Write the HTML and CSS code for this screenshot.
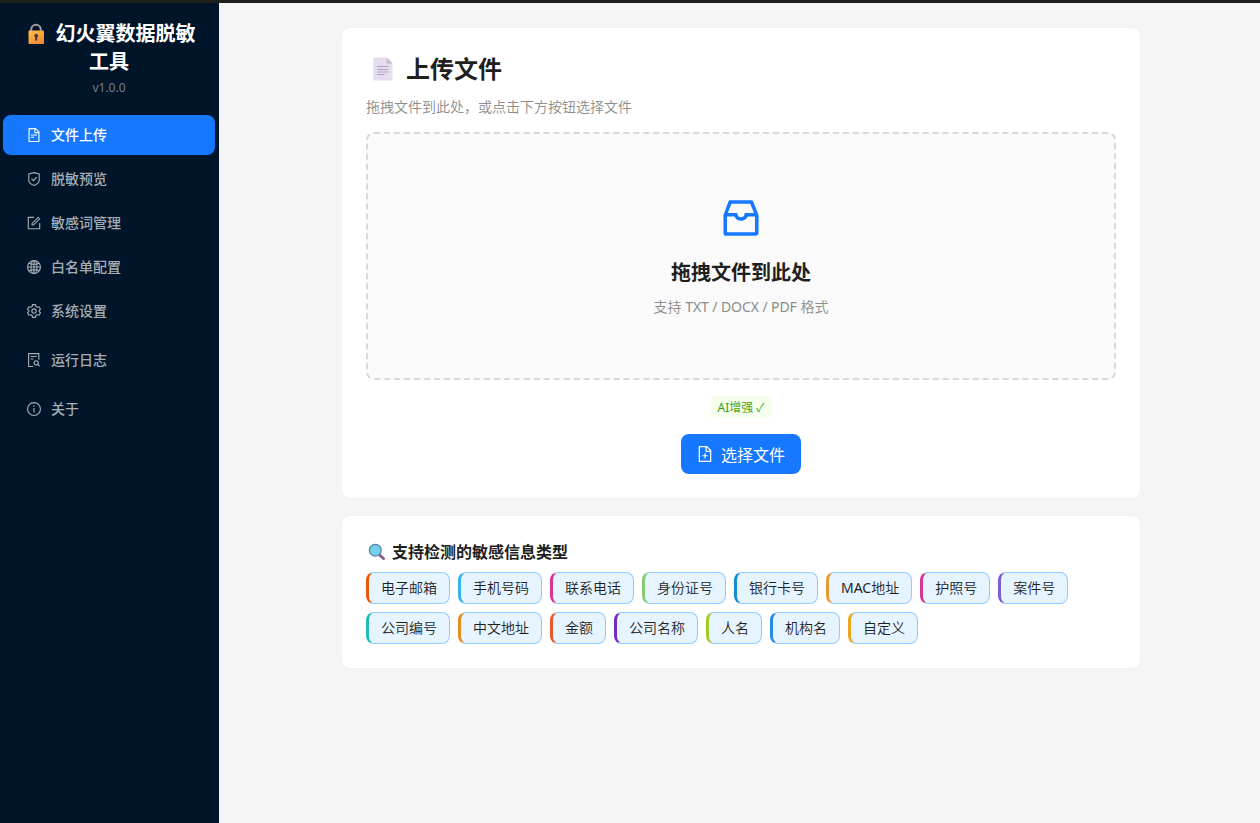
FILE: index.html
```html
<!DOCTYPE html>
<html lang="zh-CN">
<head>
<meta charset="utf-8">
<title>幻火翼数据脱敏工具</title>
<link rel="stylesheet" href="styles.css">
</head>
<body>
<div class="topline"></div>
<div class="app">
  <aside class="sidebar">
    <div class="brand">
      <h1 class="brand-title"><svg class="emoji-lock" viewBox="0 0 20 22"><path d="M5.200 10V6.500a4.800 4.800 0 0 1 9.600 0V10" fill="none" stroke="#a29aa8" stroke-width="2"/><defs><linearGradient id="gold" x1="0" y1="0" x2="0.600" y2="1"><stop offset="0" stop-color="#fcc04a"/><stop offset="1" stop-color="#f58a36"/></linearGradient></defs><rect x="2.500" y="7.500" width="15.500" height="13.500" rx="1" fill="url(#gold)"/><path d="M10.200 10.800a2 2 0 0 1 1 3.700V17.500H9.200v-3A2 2 0 0 1 10.200 10.800z" fill="#4a3440"/></svg>幻火翼数据脱敏工具</h1>
      <div class="version">v1.0.0</div>
    </div>
    <nav class="menu">
      <a class="item active"><svg class="icon" viewBox="64 64 896 896"><path d="M854.600 288.600L639.400 73.400c-6-6-14.100-9.400-22.600-9.400H192c-17.700 0-32 14.300-32 32v832c0 17.700 14.300 32 32 32h640c17.700 0 32-14.300 32-32V311.300c0-8.500-3.400-16.700-9.400-22.700zM790.200 326H602V137.800L790.200 326zm1.800 562H232V136h302v216a42 42 0 0042 42h216v494zM504 618H320c-4.400 0-8 3.600-8 8v48c0 4.400 3.600 8 8 8h184c4.400 0 8-3.600 8-8v-48c0-4.400-3.600-8-8-8zM312 490v48c0 4.400 3.600 8 8 8h384c4.400 0 8-3.600 8-8v-48c0-4.400-3.600-8-8-8H320c-4.400 0-8 3.600-8 8z"/></svg>文件上传</a>
      <a class="item"><svg class="icon line" viewBox="64 64 896 896"><path d="M512 104L846 195V600C846 740 690 850 512 922C334 850 178 740 178 600V195z"/><path d="M350 490L475 620L680 385"/></svg>脱敏预览</a>
      <a class="item"><svg class="icon" viewBox="64 64 896 896"><path d="M904 512h-56c-4.400 0-8 3.600-8 8v320H184V184h320c4.400 0 8-3.600 8-8v-56c0-4.400-3.600-8-8-8H144c-17.700 0-32 14.300-32 32v736c0 17.700 14.300 32 32 32h736c17.700 0 32-14.300 32-32V520c0-4.400-3.600-8-8-8z"/><path d="M355.900 534.900L354 653.800c-.1 8.900 7.100 16.200 16 16.200h.4l118-2.900c2-.1 4-.9 5.400-2.300l415.900-415c3.100-3.100 3.100-8.200 0-11.300L785.400 114.300c-1.600-1.600-3.600-2.300-5.700-2.300s-4.100.8-5.700 2.300l-415.800 415a8.300 8.300 0 00-2.300 5.600zm63.500 23.600L779.700 199l45.200 45.100-360.500 359.700-45.700 1.100.7-46.400z"/></svg>敏感词管理</a>
      <a class="item"><svg class="icon line" viewBox="64 64 896 896"><circle cx="512" cy="512" r="412"/><ellipse cx="512" cy="512" rx="190" ry="412"/><path d="M100 512H924M512 100V924M190 270Q512 420 834 270M190 754Q512 604 834 754"/></svg>白名单配置</a>
      <a class="item"><svg class="icon line" viewBox="64 64 896 896"><circle cx="512" cy="512" r="140"/><path d="M424 104H600L634 224Q678 240 718 272L838 244L926 396L840 484Q848 512 840 540L926 628L838 780L718 752Q678 784 634 800L600 920H424L390 800Q346 784 306 752L186 780L98 628L184 540Q176 512 184 484L98 396L186 244L306 272Q346 240 390 224z"/></svg>系统设置</a>
      <a class="item spaced"><svg class="icon line" viewBox="64 64 896 896"><path d="M470 924H168V100H820V500M296 290H690M296 450H480"/><circle cx="650" cy="690" r="134"/><path d="M745 785L870 910"/></svg>运行日志</a>
      <a class="item spaced"><svg class="icon line" viewBox="64 64 896 896"><circle cx="512" cy="512" r="412"/><path d="M512 448V736M512 288V384"/></svg>关于</a>
    </nav>
  </aside>
  <main class="content">
    <section class="card upload">
      <h2 class="title"><svg class="emoji-page" viewBox="0 0 20 24"><path d="M.500.500H14L19.500 6V23.500H.500z" fill="#e6def0"/><path d="M13.500.500 19.500 6.500H13.500z" fill="#c5bad0"/><path d="M4 9.500H15.500M4 12.500H15.500M4 15H15.500M4 17.500H11.500" stroke="#b1a5bb" stroke-width="1"/></svg>上传文件</h2>
      <p class="hint">拖拽文件到此处，或点击下方按钮选择文件</p>
      <div class="dropzone">
        <svg class="inbox" viewBox="0 0 1024 1024"><path d="M885.200 446.300l-.2-.8-112.200-285.100c-5-16.100-19.900-27.200-36.800-27.200H281.200c-17 0-32.100 11.300-36.900 27.600L139.400 443l-.3.7-.2.8c-1.300 4.900-1.700 9.900-1 14.800-.1 1.600-.2 3.200-.2 4.800V830a60.900 60.900 0 0060.800 60.800h627.200c33.500 0 60.800-27.300 60.900-60.800V464.100c0-1.300 0-2.600-.1-3.700.4-4.900 0-9.600-1.300-14.100zm-295.800-43l-.3 15.700c-.8 44.900-31.800 75.100-77.100 75.100-22.100 0-41.100-7.100-54.800-20.600S436 441.200 435.600 419l-.3-15.700H229.500L309 210h399.200l81.700 193.300H589.400zm-375 76.800h157.300c24.300 57.100 76 90.800 140.400 90.800 33.700 0 65-9.400 90.300-27.200 22.200-15.600 39.500-37.400 50.700-63.600h156.500V814H214.400V480.100z"/></svg>
        <h3 class="drop-title">拖拽文件到此处</h3>
        <p class="formats">支持 <span class="latin">TXT / DOCX / PDF</span> 格式</p>
      </div>
      <span class="ai-tag"><span class="latin">AI</span>增强 ✓</span>
      <button class="choose"><svg class="icon" viewBox="64 64 896 896"><path d="M854.600 288.600L639.400 73.400c-6-6-14.100-9.400-22.600-9.400H192c-17.700 0-32 14.300-32 32v832c0 17.700 14.300 32 32 32h640c17.700 0 32-14.300 32-32V311.300c0-8.500-3.400-16.700-9.400-22.700zM790.200 326H602V137.800L790.200 326zm1.800 562H232V136h302v216a42 42 0 0042 42h216v494zM544 472c0-4.400-3.600-8-8-8h-48c-4.400 0-8 3.600-8 8v108H372c-4.400 0-8 3.600-8 8v48c0 4.400 3.600 8 8 8h108v108c0 4.400 3.600 8 8 8h48c4.400 0 8-3.600 8-8V644h108c4.400 0 8-3.600 8-8v-48c0-4.400-3.600-8-8-8H544V472z"/></svg><span class="choose-label">选择文件</span></button>
    </section>
    <section class="card types">
      <h4 class="types-title"><svg class="emoji-search" viewBox="0 0 18 18"><path d="M11 11.500 15.500 15.500" stroke="#8b5a86" stroke-width="3" stroke-linecap="round"/><circle cx="7.300" cy="7.200" r="5.900" fill="#72d0ea" stroke="#5685a2" stroke-width="1.200"/></svg>支持检测的敏感信息类型</h4>
      <div class="tags">
        <span class="tag email">电子邮箱</span><span class="tag phone">手机号码</span><span class="tag tel">联系电话</span><span class="tag idcard">身份证号</span><span class="tag bank">银行卡号</span><span class="tag mac"><span class="latin">MAC</span>地址</span><span class="tag passport">护照号</span><span class="tag case">案件号</span><span class="tag corpid">公司编号</span><span class="tag address">中文地址</span><span class="tag money">金额</span><span class="tag corp">公司名称</span><span class="tag person">人名</span><span class="tag org">机构名</span><span class="tag custom">自定义</span>
      </div>
    </section>
  </main>
</div>
</body>
</html>
```

FILE: styles.css
```css
* { box-sizing: border-box; }
body { margin: 0; height: 823px; overflow: hidden; display: flex; flex-direction: column; background: #f5f5f5; color: #1f1f1f; font: 14px/22px "Noto Sans", "Noto Sans CJK SC", sans-serif; }
h1, h2, h3, h4, p { margin: 0; }
svg { flex: none; }
.latin { font-weight: 400; }
.topline { height: 3px; background: #1d211b; flex: none; }
.app { display: flex; flex: 1; }
.sidebar { width: 219px; background: #001529; padding: 17px 4px 0 3px; flex: none; }
.brand { text-align: center; padding: 0 18px; height: 95px; }
.brand-title { font-size: 20px; line-height: 28px; font-weight: 700; color: #fff; }
.emoji-lock { width: 20px; height: 22px; margin: 0 10px 0 3px; vertical-align: -4px; }
.version { font-size: 12px; line-height: 20px; margin-top: 2px; color: #77818b; }
.menu { display: flex; flex-direction: column; gap: 4px; }
.item { display: flex; align-items: center; gap: 10px; height: 40px; padding-left: 24px; border-radius: 8px; color: #a6adb4; font-weight: 500; }
.item.spaced { margin-top: 5px; }
.item.active { background: #1677ff; color: #fff; }
.icon { width: 14px; height: 14px; fill: currentColor; }
.line { fill: none; stroke: currentColor; stroke-width: 72; }
.content { padding: 25px 0 0 123px; }
.card { width: 798px; background: #fff; box-shadow: 0 0 0 1px #f1f1f1; border-radius: 8px; padding: 24px; }
.upload { height: 470px; padding-top: 22px; display: flex; flex-direction: column; align-items: center; }
.title { align-self: stretch; display: flex; align-items: center; gap: 13px; padding-left: 7px; height: 38px; font-size: 24px; line-height: 32px; font-weight: 600; }
.emoji-page { width: 20px; height: 24px; }
.hint { align-self: stretch; color: #8c8c8c; font-weight: 350; margin: 8px 0 14px; }
.dropzone { align-self: stretch; height: 248px; border: 2px dashed #d9d9d9; border-radius: 8px; background: #fafafa; display: flex; flex-direction: column; align-items: center; padding-top: 60px; }
.inbox { width: 48px; height: 48px; fill: #1677ff; }
.drop-title { font-size: 20px; line-height: 28px; font-weight: 600; margin-top: 17px; }
.formats { color: #8c8c8c; font-weight: 350; margin-top: 9px; }
.formats .latin { letter-spacing: -0.08px; }
.ai-tag { margin-top: 16px; width: 62px; height: 22px; line-height: 24px; background: #f6ffed; color: #389e0d; border-radius: 4px; font-size: 12px; font-weight: 350; text-align: center; white-space: nowrap; }
.choose { margin-top: 16px; width: 120px; height: 40px; border: 0; border-radius: 8px; background: #1677ff; color: #fff; font: 16px/24px "Noto Sans", "Noto Sans CJK SC", sans-serif; display: flex; align-items: center; justify-content: center; gap: 8px; padding: 0; }
.choose-label { padding-top: 2px; }
.choose .icon { width: 16px; height: 16px; }
.types { height: 152px; margin-top: 18px; }
.types-title { display: flex; align-items: center; gap: 6px; padding-left: 2px; font-size: 16px; line-height: 24px; font-weight: 600; }
.emoji-search { width: 18px; height: 18px; }
.tags { display: flex; flex-wrap: wrap; gap: 8px; margin-top: 8px; }
.tag { height: 32px; padding: 0 12px; line-height: 30px; font-weight: 350; border: 1px solid #91caff; border-left: 3px solid; border-radius: 8px; background: #e6f4ff; white-space: nowrap; }
.email { border-left-color: #e8590c; }
.phone { border-left-color: #36b3e8; }
.tel, .passport { border-left-color: #d63694; }
.idcard { border-left-color: #87cc70; }
.bank { border-left-color: #168ad3; }
.mac { border-left-color: #e99836; }
.case { border-left-color: #7562cf; }
.corpid { border-left-color: #20bcb7; }
.address { border-left-color: #e98c20; }
.money { border-left-color: #e85a29; }
.corp { border-left-color: #702dc3; }
.person { border-left-color: #9dce26; }
.org { border-left-color: #228be6; }
.custom { border-left-color: #e9a820; }
```
